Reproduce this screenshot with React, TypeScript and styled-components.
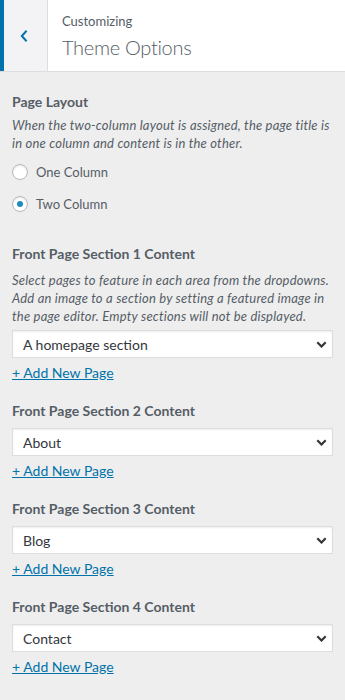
import React from "react"
import styled, { createGlobalStyle } from "styled-components"

const GlobalStyle = createGlobalStyle`
  html, body {
    margin: 0;
    padding: 0;
    background: #eeeeee;
  }
  body {
    font-family: "Segoe UI", Lato, "Noto Sans", sans-serif;
    color: #555d66;
  }
`

const sections = [
  { n: 1, value: "A homepage section", withNote: true },
  { n: 2, value: "About", withNote: false },
  { n: 3, value: "Blog", withNote: false },
  { n: 4, value: "Contact", withNote: false },
]

const options = ["— Select —", "A homepage section", "About", "Blog", "Contact"]

const App: React.FC = () => {
  return (
    <Page>
      <GlobalStyle />
      <Header>
        <BackButton aria-label="Back">
          <svg width="10" height="14" viewBox="0 0 10 14">
            <path d="M7.6 1.8 L2.8 7 L7.6 12.2" fill="none" stroke="#0073aa" strokeWidth="2" />
          </svg>
        </BackButton>
        <TitleBlock>
          <Eyebrow>Customizing</Eyebrow>
          <Title>Theme Options</Title>
        </TitleBlock>
      </Header>

      <Body>
        <Control $after={30}>
          <Label $tight>Page Layout</Label>
          <Note>
            When the two-column layout is assigned, the page title is in one column and content is in the
            other.
          </Note>
          <RadioList>
            <RadioRow>
              <Radio type="radio" name="layout" />
              One Column
            </RadioRow>
            <RadioRow>
              <Radio type="radio" name="layout" defaultChecked />
              Two Column
            </RadioRow>
          </RadioList>
        </Control>

        {sections.map((s) => (
          <Control key={s.n} $after={18}>
            <Label>Front Page Section {s.n} Content</Label>
            {s.withNote && (
              <Note $before>
                Select pages to feature in each area from the dropdowns. Add an image to a section by setting
                a featured image in the page editor. Empty sections will not be displayed.
              </Note>
            )}
            <SelectWrap>
              <Select defaultValue={s.value}>
                {options.map((o) => (
                  <option key={o}>{o}</option>
                ))}
              </Select>
              <Caret width="11" height="7" viewBox="0 0 11 7">
                <path d="M1.3 1.3 L5.5 5.5 L9.7 1.3" fill="none" stroke="#32373c" strokeWidth="2.2" />
              </Caret>
            </SelectWrap>
            <AddLink href="#">+ Add New Page</AddLink>
          </Control>
        ))}
      </Body>
    </Page>
  )
}

const Page = styled.div`
  width: 345px;
  min-height: 700px;
  background: #eeeeee;
`

const Header = styled.header`
  display: flex;
  height: 71px;
  background: #ffffff;
  border-bottom: 1px solid #dddddd;
`

const BackButton = styled.button`
  display: flex;
  align-items: center;
  justify-content: center;
  width: 48px;
  padding: 0 4px 0 0;
  margin: 0;
  background: #f3f3f5;
  border: 0;
  border-left: 4px solid #0073aa;
  border-right: 1px solid #dddddd;
  cursor: pointer;
`

const TitleBlock = styled.div`
  display: flex;
  flex-direction: column;
  padding: 12px 0 0 14px;
`

const Eyebrow = styled.span`
  font-size: 13px;
  line-height: 18px;
  color: #555d66;
`

const Title = styled.h2`
  margin: 4px 0 0;
  font-size: 20px;
  font-weight: 300;
  line-height: 26px;
  letter-spacing: -0.3px;
  color: #555d66;
`

const Body = styled.div`
  display: flex;
  flex-direction: column;
  padding: 20px 12px 24px;
`

const Control = styled.div<{ $after: number }>`
  display: flex;
  flex-direction: column;
  margin-bottom: ${(p) => p.$after}px;
`

const Label = styled.span<{ $tight?: boolean }>`
  font-size: 14px;
  font-weight: 700;
  line-height: 20px;
  color: #555d66;
  margin-bottom: ${(p) => (p.$tight ? 4 : 7)}px;
`

const Note = styled.p<{ $before?: boolean }>`
  margin: 0 0 ${(p) => (p.$before ? 5 : 0)}px;
  font-size: 13px;
  font-style: italic;
  line-height: 18px;
  letter-spacing: 0.2px;
  color: #555d66;
`

const RadioList = styled.div`
  display: flex;
  flex-direction: column;
  gap: 12px;
  margin-top: 10px;
`

const RadioRow = styled.label`
  display: flex;
  align-items: center;
  gap: 8px;
  font-size: 13px;
  line-height: 20px;
  color: #555d66;
`

const Radio = styled.input`
  appearance: none;
  margin: 0;
  width: 16px;
  height: 16px;
  border-radius: 50%;
  border: 1px solid #b4b9be;
  background: #ffffff;
  box-shadow: inset 0 1px 2px rgba(0, 0, 0, 0.1);
  display: grid;
  place-items: center;

  &:checked::before {
    content: "";
    width: 6px;
    height: 6px;
    border-radius: 50%;
    background: #1e8cbe;
  }
`

const SelectWrap = styled.div`
  position: relative;
`

const Select = styled.select`
  appearance: none;
  display: block;
  width: 100%;
  height: 28px;
  margin: 0;
  padding: 0 24px 0 10px;
  font-family: inherit;
  font-size: 14px;
  color: #32373c;
  background: #ffffff;
  border: 1px solid #dddddd;
  border-radius: 0;
  box-shadow: inset 0 1px 2px rgba(0, 0, 0, 0.07);
`

const Caret = styled.svg`
  position: absolute;
  right: 6px;
  top: 11px;
  pointer-events: none;
`

const AddLink = styled.a`
  align-self: flex-start;
  margin-top: 5px;
  font-size: 14px;
  line-height: 20px;
  color: #0073aa;
  text-decoration: underline;
`

export default App
